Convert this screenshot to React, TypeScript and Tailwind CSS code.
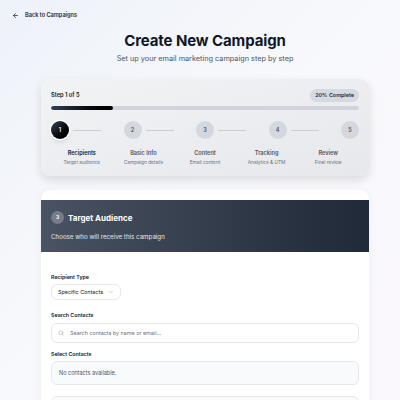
import React from 'react';
import { ArrowLeft, ChevronDown, Search } from 'lucide-react';

const steps = [
  { n: 1, title: 'Recipients', sub: 'Target audience' },
  { n: 2, title: 'Basic Info', sub: 'Campaign details' },
  { n: 3, title: 'Content', sub: 'Email content' },
  { n: 4, title: 'Tracking', sub: 'Analytics & UTM' },
  { n: 5, title: 'Review', sub: 'Final review' },
];

const StepRow: React.FC = () => (
  <div className="mt-[11px]">
    <div className="flex items-center">
      {steps.map((s, i) => {
        const active = i === 0;
        const last = i === steps.length - 1;
        return (
          <div key={s.n} className={`flex items-center ${last ? '' : 'flex-1'}`}>
            <div
              className={`w-[18px] h-[18px] rounded-full flex items-center justify-center text-[5.5px] font-semibold ${
                active
                  ? 'bg-gradient-to-br from-gray-700 to-black text-white ring-[1.5px] ring-white shadow-md'
                  : 'bg-[#d4d7dd] text-gray-600'
              }`}
            >
              {s.n}
            </div>
            {!last && <div className="ml-[4px] w-[28px] h-px bg-[#c9cdd4]" />}
          </div>
        );
      })}
    </div>
    <div className="grid grid-cols-5 mt-[11px]">
      {steps.map((s, i) => (
        <div key={s.n} className="flex flex-col items-center">
          <span className={`text-[5.6px] leading-[7px] font-semibold ${i === 0 ? 'text-gray-900' : 'text-gray-600'}`}>{s.title}</span>
          <span className="text-[4.8px] leading-[7px] mt-[2px] text-gray-500">{s.sub}</span>
        </div>
      ))}
    </div>
  </div>
);

export default function App() {
  return (
    <div
      className="w-[400px] h-[400px] overflow-hidden bg-gradient-to-br from-[#eef2f9] via-[#f8f9fc] to-[#faf7fd] text-gray-900"
      style={{ fontFamily: 'Inter, "Noto Sans", sans-serif' }}
    >
      <div className="px-[12px] pt-[11px]">
        <div className="flex items-center gap-[6px] text-[5.6px] leading-[8px] font-semibold text-gray-800">
          <ArrowLeft className="w-[7px] h-[7px]" strokeWidth={2.5} />
          <span>Back to Campaigns</span>
        </div>
      </div>

      <div className="mt-[12px] pl-[10px] flex flex-col items-center">
        <h1 className="text-[15px] leading-[19px] font-bold tracking-[-0.1px]">Create New Campaign</h1>
        <p className="mt-[4px] text-[7.3px] leading-[10px] text-gray-600">Set up your email marketing campaign step by step</p>
      </div>

      <div className="ml-[41px] mr-[31px] mt-[15px] rounded-[9px] bg-gradient-to-br from-[#f2f3f5] to-[#e6e8ec] shadow-[0_4px_10px_rgba(0,0,0,0.12)] px-[10px] pt-[10px] pb-[10px]">
        <div className="flex items-center justify-between">
          <span className="text-[5.7px] font-semibold text-gray-900">Step 1 of 5</span>
          <span className="h-[13px] px-[5px] rounded-full bg-[#d6d9df] text-[5.4px] font-semibold text-gray-800 flex items-center">20% Complete</span>
        </div>
        <div className="mt-[4px] h-[4px] rounded-full bg-[#d1d5db] overflow-hidden">
          <div className="h-full w-[20%] rounded-full bg-gradient-to-r from-gray-700 to-black" />
        </div>
        <StepRow />
      </div>

      <div className="ml-[41px] mr-[31px] mt-[14px] rounded-t-[9px] bg-white pt-[10px] shadow-[0_2px_10px_rgba(0,0,0,0.05)]">
        <div className="bg-gradient-to-r from-[#4a5363] to-[#1f2937] px-[10px] pt-[11px] pb-[11px]">
          <div className="flex items-center gap-[4px]">
            <div className="w-[13px] h-[13px] rounded-full bg-white/25 flex items-center justify-center text-[5px] font-bold text-white">3</div>
            <span className="text-[8px] leading-[10px] font-bold text-white">Target Audience</span>
          </div>
          <p className="mt-[8px] text-[6.2px] leading-[9px] text-gray-200">Choose who will receive this campaign</p>
        </div>

        <div className="px-[10px] pt-[21px]">
          <label className="block text-[5.3px] leading-[8px] font-semibold text-gray-900">Recipient Type</label>
          <div className="mt-[3px] w-fit flex items-center gap-[5px] h-[16px] px-[6px] rounded-[6px] border border-gray-200 bg-white text-[5.4px] text-gray-900">
            Specific Contacts
            <ChevronDown className="w-[6px] h-[6px] text-gray-400" />
          </div>

          <label className="mt-[11px] block text-[5.3px] leading-[8px] font-semibold text-gray-900">Search Contacts</label>
          <div className="mt-[4px] flex items-center gap-[6px] h-[20px] px-[6px] rounded-[6px] border border-gray-200 bg-white">
            <Search className="w-[6px] h-[6px] text-gray-400" />
            <span className="text-[5.4px] text-gray-500">Search contacts by name or email...</span>
          </div>

          <label className="mt-[7px] block text-[5.3px] leading-[8px] font-semibold text-gray-900">Select Contacts</label>
          <div className="mt-[3px] h-[24px] flex items-center px-[7px] rounded-[6px] border border-gray-200 bg-gray-50">
            <span className="text-[5.5px] text-gray-600">No contacts available.</span>
          </div>

          <div className="mt-[11px] h-[24px] rounded-[6px] border border-gray-200 bg-gray-50" />
        </div>
      </div>
    </div>
  );
}
